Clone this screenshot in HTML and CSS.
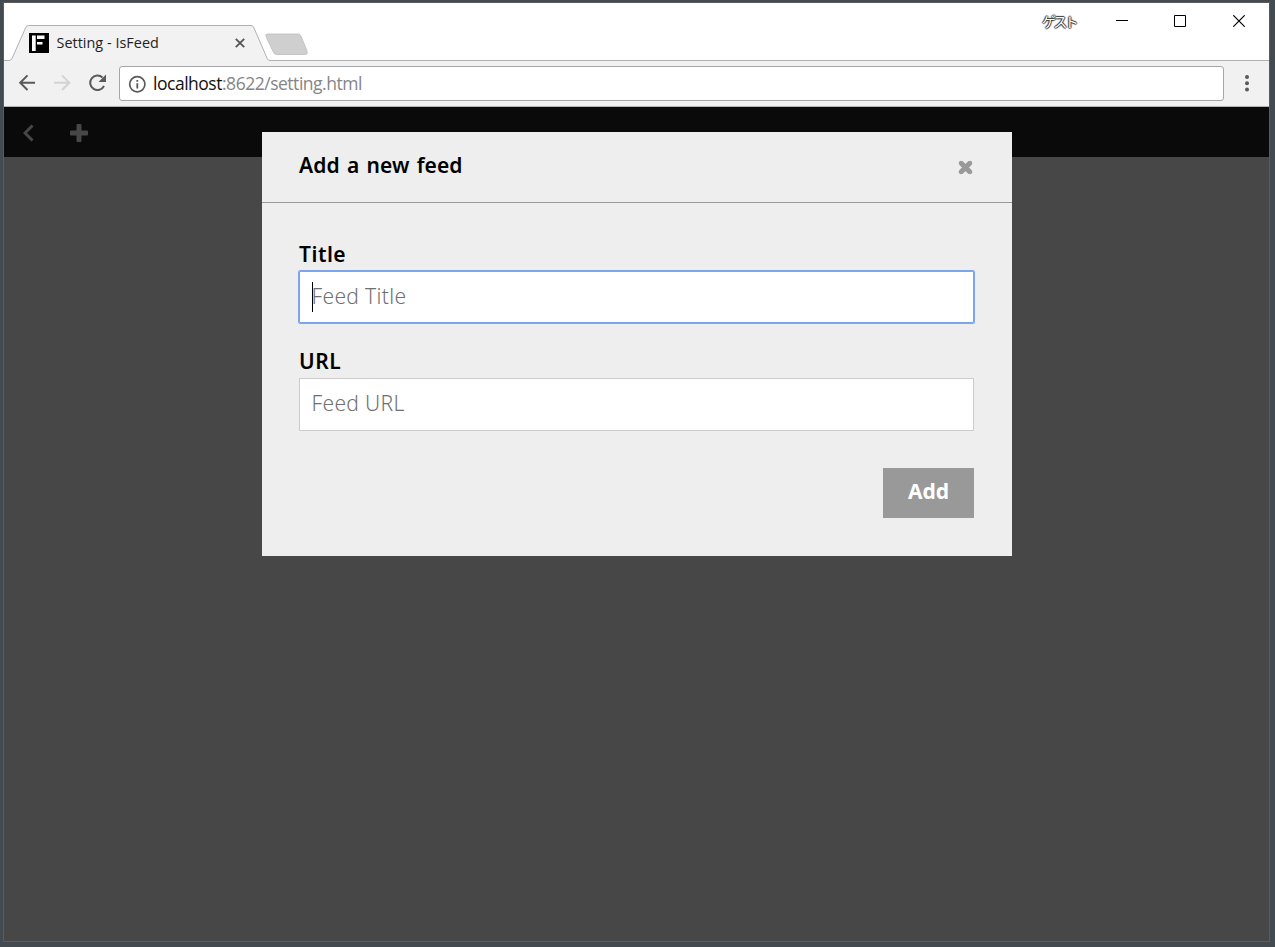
FILE: index.html
```html
<!DOCTYPE html>
<html lang="en">
<head>
<meta charset="utf-8">
<title>Setting - IsFeed</title>
<link rel="stylesheet" href="styles.css">
</head>
<body>
<div class="window">
  <header class="titlebar">
    <div class="tab">
      <svg class="tab-shape" width="306" height="37" viewBox="0 0 306 37">
        <path d="M0 35.500H5Q7 35.500 8 33.500L21.500 3Q22.500 .5 24.500 .5H247Q249 .5 250 3L263.200 33.500Q264.200 35.500 266 35.500H306V37H0Z" fill="#f2f2f2"/>
        <path d="M0 35.500H5Q7 35.500 8 33.500L21.500 3Q22.500 .5 24.500 .5H247Q249 .5 250 3L263.200 33.500Q264.200 35.500 266 35.500H306" fill="none" stroke="#b0b0b0"/>
        <path d="M263.500 9H294Q296 9 297 11L303 26Q304 29.500 301.500 29.500H272.500Q270.500 29.500 269.500 27.500L262 11.500Q261 9 263.500 9Z" fill="#cfcfcf" stroke="#bdbdbd" stroke-width=".8"/>
      </svg>
      <div class="tab-content">
        <svg width="20" height="20" viewBox="0 0 20 20"><path d="M0 0H20V20H0Z"/><path d="M3 2.500H6.700V18H3ZM8 2.500H15.500V6H8ZM8 9H13.500V11.500H8Z" fill="#fff"/></svg>
        <span class="tab-title">Setting - IsFeed</span>
        <svg width="10" height="10" viewBox="0 0 10 10"><path d="M.8 .8L9.200 9.200M9.200 .8L.8 9.200" stroke="#555" stroke-width="1.800"/></svg>
      </div>
    </div>
    <div class="controls">
      <span class="guest">ゲスト</span>
      <svg class="window-buttons" width="117" height="14" viewBox="0 0 117 14" fill="none" stroke="#000"><path d="M0 6.500H12M58.500 1.500H69.500V12.500H58.500Z"/></svg>
      <svg width="12" height="12" viewBox="0 0 12 12"><path d="M.3 .3L11.700 11.700M11.700 .3L.3 11.700" stroke="#000" stroke-width="1.200"/></svg>
    </div>
  </header>
  <nav class="toolbar">
    <svg class="nav-icons" width="115" height="44" viewBox="0 0 115 44" fill="none" stroke-width="2">
      <path d="M31 21.700H16.500M23.500 14.400L16.200 21.700L23.500 29" stroke="#5a5a5a"/>
      <path d="M50 21.700H64.500M58 14.400L65.300 21.700L58 29" stroke="#d3d3d3"/>
      <path d="M100 25A7.300 7.300 0 1 1 98.500 16.500" stroke="#5a5a5a" stroke-width="2"/>
      <path d="M102 13.500V21H94.500Z" fill="#5a5a5a"/>
    </svg>
    <div class="address">
      <svg width="18" height="18" viewBox="0 0 18 18"><circle cx="9.300" cy="9.300" r="7.600" fill="none" stroke="#5a5a5a" stroke-width="1.700"/><path d="M8.400 5H10.200V6.800H8.400ZM8.400 8.300H10.200V13.600H8.400Z" fill="#5a5a5a"/></svg>
      <span class="url"><b>localhost</b>:8622/setting.html</span>
    </div>
    <svg class="menu" width="4" height="18" viewBox="0 0 4 18" fill="#5a5a5a"><circle cx="2" cy="2" r="2"/><circle cx="2" cy="8.200" r="2"/><circle cx="2" cy="14.400" r="2"/></svg>
  </nav>
  <main class="page">
    <div class="appbar">
      <svg width="11" height="18" viewBox="0 0 11 18"><path d="M9.500 1.500L2 9L9.500 16.500" fill="none" stroke="#474747" stroke-width="3"/></svg>
      <svg width="18" height="18" viewBox="0 0 18 18"><path d="M7.500 0H10.500Q11.500 0 11.500 1V6.500H17Q18 6.500 18 7.500V10.500Q18 11.500 17 11.500H11.500V17Q11.500 18 10.500 18H7.500Q6.500 18 6.500 17V11.500H1Q0 11.500 0 10.500V7.500Q0 6.500 1 6.500H6.500V1Q6.500 0 7.500 0Z" fill="#474747"/></svg>
    </div>
    <section class="modal">
      <div class="modal-head">
        <h1>Add a new feed</h1>
        <svg width="15" height="15" viewBox="0 0 15 15"><path d="M2.800 2.800L12.200 12.200M12.200 2.800L2.800 12.200" stroke="#999" stroke-width="5"/><path d="M2.800 2.800L12.200 12.200M12.200 2.800L2.800 12.200" stroke="#999" stroke-width="4" stroke-linecap="round"/></svg>
      </div>
      <form class="modal-body">
        <label class="label">Title</label>
        <div class="field focused"><span class="caret"></span><span>Feed Title</span></div>
        <label class="label">URL</label>
        <div class="field"><span>Feed URL</span></div>
        <button class="add" type="button">Add</button>
      </form>
    </section>
  </main>
</div>
</body>
</html>
```
FILE: styles.css
```css
* { box-sizing: border-box; }
body { margin: 0; height: 947px; padding: 2px 5px 5px 3px; background: #434b51; overflow: hidden; }
svg { display: block; flex: none; }
.window { height: 940px; border: 1px solid #5b5b5b; display: flex; flex-direction: column; }
.titlebar { height: 58px; background: #fff; border-bottom: 1px solid #b0b0b0; display: flex; justify-content: space-between; }
.tab { position: relative; margin-top: 22px; width: 306px; height: 36px; }
.tab-shape { position: absolute; left: 0; top: 0; }
.tab-content { position: relative; display: flex; align-items: center; height: 36px; padding-left: 25px; width: 241px; }
.tab-title { flex: 1; margin-left: 7.500px; font: 14.4px/20px "Open Sans", sans-serif; letter-spacing: .03px; color: #222; white-space: nowrap; }
.controls { display: flex; align-items: center; height: 36px; padding-right: 24px; }
.guest { width: 74px; font: 14px/20px "Noto Sans CJK JP", sans-serif; letter-spacing: -2.700px; color: #fff; text-shadow: 1px 0 1px #333, -1px 0 1px #333, 0 1px 1px #333, 0 -1px 1px #333; }
.toolbar { height: 46px; background: #f1f1f1; border-bottom: 1px solid #b0b0b0; display: flex; }
.address { width: 1105px; height: 35px; margin-top: 5px; background: #fff; border: 1px solid #a6a6a6; border-radius: 3px; display: flex; align-items: center; padding-left: 8px; gap: 7px; }
.url { font: 17.500px/24px "Open Sans", sans-serif; letter-spacing: -.48px; color: #858585; white-space: nowrap; padding-bottom: 1px; }
.url b { font-weight: 400; color: #111; }
.menu { margin: 14px 0 0 21px; }
.page { flex: 1; background: #474747; }
.appbar { height: 50px; background: #0a0a0a; display: flex; align-items: center; gap: 36px; padding: 1px 0 0 19px; }
.modal { width: 750px; height: 424px; margin: -25px 0 0 258px; background: #eee; font: 21px/28px "Noto Sans", sans-serif; position: relative; }
.modal-head { height: 71px; border-bottom: 1px solid #999; display: flex; align-items: center; justify-content: space-between; padding: 0 39px 0 37px; }
h1 { margin: 0 0 4px; font: inherit; font-weight: 600; letter-spacing: .08px; word-spacing: 1.700px; }
.modal-body { display: flex; flex-direction: column; padding: 37px 38px 0 37px; }
.label { height: 31px; font-weight: 600; letter-spacing: .5px; }
.field { height: 53px; display: flex; align-items: center; background: #fff; border: 1px solid #ccc; padding: 0 0 3px 11.500px; margin-bottom: 23px; color: #707070; font-weight: 300; letter-spacing: .35px; }
.focused { height: 52px; margin-bottom: 24px; outline: 1px solid #7ba6ee; border-color: #7ba6ee; border-radius: 1px; }
.caret { width: 1px; height: 30px; margin: 3px -1px 0 0; background: #000; }
.add { align-self: flex-end; width: 91px; height: 50px; margin-top: 14px; border: 0; padding: 0 0 4px; background: #999; color: #fff; font: 700 21px/28px "Noto Sans", sans-serif; }
```
